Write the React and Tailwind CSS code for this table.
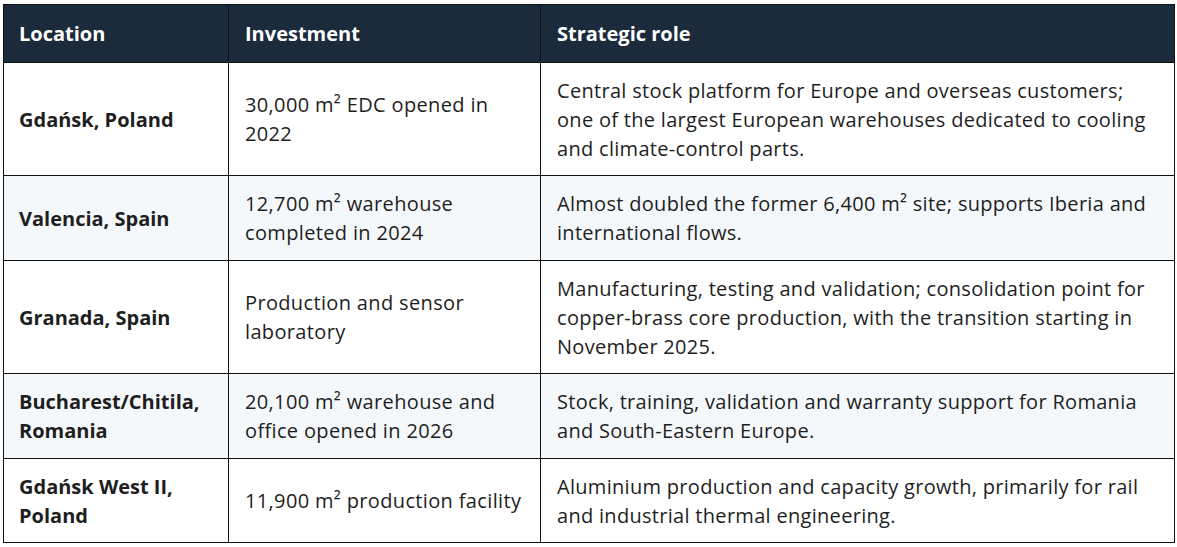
const rows = [
  {
    location: ['Gdańsk, Poland'],
    investment: ['30,000 m² EDC opened in', '2022'],
    role: [
      'Central stock platform for Europe and overseas customers;',
      'one of the largest European warehouses dedicated to cooling',
      'and climate-control parts.',
    ],
    h: 'h-[113px]',
  },
  {
    location: ['Valencia, Spain'],
    investment: ['12,700 m² warehouse', 'completed in 2024'],
    role: ['Almost doubled the former 6,400 m² site; supports Iberia and', 'international flows.'],
    h: 'h-[85px]',
    shade: true,
  },
  {
    location: ['Granada, Spain'],
    investment: ['Production and sensor', 'laboratory'],
    role: [
      'Manufacturing, testing and validation; consolidation point for',
      'copper-brass core production, with the transition starting in',
      'November 2025.',
    ],
    h: 'h-[113px]',
  },
  {
    location: ['Bucharest/Chitila,', 'Romania'],
    investment: ['20,100 m² warehouse and', 'office opened in 2026'],
    role: ['Stock, training, validation and warranty support for Romania', 'and South-Eastern Europe.'],
    h: 'h-[85px]',
    shade: true,
  },
  {
    location: ['Gdańsk West II,', 'Poland'],
    investment: ['11,900 m² production facility'],
    role: ['Aluminium production and capacity growth, primarily for rail', 'and industrial thermal engineering.'],
    h: 'h-[84px]',
  },
];

function Lines({ lines }) {
  return lines.map((line, i) => (
    <div key={i} className="whitespace-nowrap">
      {line}
    </div>
  ));
}

export default function App() {
  return (
    <div className="min-h-screen bg-white pt-[4px] pl-[3px] font-['Open_Sans',sans-serif]">
      <table className="w-[1172px] table-fixed border-collapse border border-[#111] text-[20px] leading-[29px] text-[#1e1e1e]">
        <colgroup>
          <col className="w-[225px]" />
          <col className="w-[312px]" />
          <col />
        </colgroup>
        <thead>
          <tr className="h-[58px] bg-[#1b2b3b] text-white">
            <th className="border border-[#111] px-[15px] text-left font-bold">Location</th>
            <th className="border border-[#111] px-[16px] text-left font-bold">Investment</th>
            <th className="border border-[#111] px-[16px] text-left font-bold">Strategic role</th>
          </tr>
        </thead>
        <tbody>
          {rows.map((row, i) => (
            <tr key={i} className={`${row.h} ${row.shade ? 'bg-[#f5f8fb]' : 'bg-white'}`}>
              <td className="border border-[#111] px-[15px] align-middle font-bold">
                <Lines lines={row.location} />
              </td>
              <td className="border border-[#111] px-[16px] align-middle tracking-[0.35px]">
                <Lines lines={row.investment} />
              </td>
              <td className="border border-[#111] px-[16px] align-middle tracking-[0.3px]">
                <Lines lines={row.role} />
              </td>
            </tr>
          ))}
        </tbody>
      </table>
    </div>
  );
}
